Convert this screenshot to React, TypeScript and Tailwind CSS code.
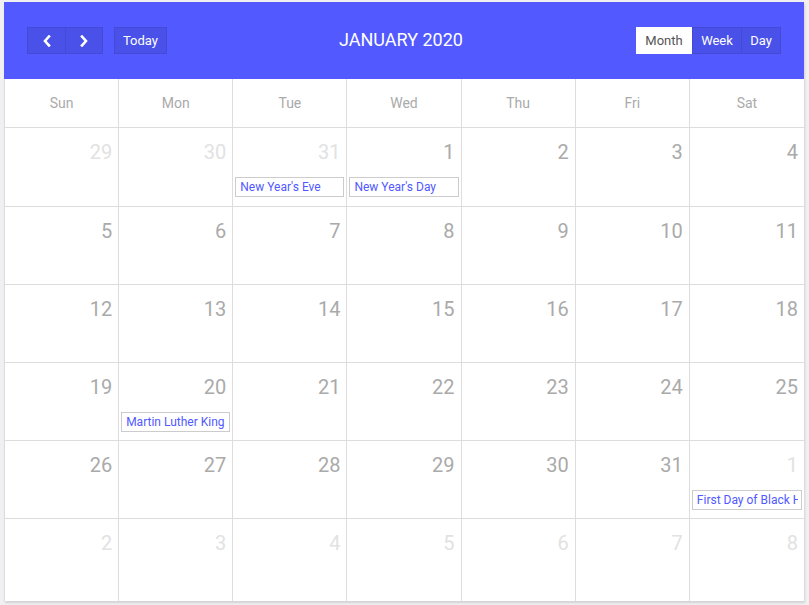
import React from "react";

type Cell = { d: number; cur: boolean; ev?: string };

const rows: Cell[][] = [
  [
    { d: 29, cur: false },
    { d: 30, cur: false },
    { d: 31, cur: false, ev: "New Year's Eve" },
    { d: 1, cur: true, ev: "New Year's Day" },
    { d: 2, cur: true },
    { d: 3, cur: true },
    { d: 4, cur: true },
  ],
  [5, 6, 7, 8, 9, 10, 11].map((d) => ({ d, cur: true })),
  [12, 13, 14, 15, 16, 17, 18].map((d) => ({ d, cur: true })),
  [19, 20, 21, 22, 23, 24, 25].map((d) => ({
    d,
    cur: true,
    ev: d === 20 ? "Martin Luther King" : undefined,
  })),
  [
    { d: 26, cur: true },
    { d: 27, cur: true },
    { d: 28, cur: true },
    { d: 29, cur: true },
    { d: 30, cur: true },
    { d: 31, cur: true },
    { d: 1, cur: false, ev: "First Day of Black History Month" },
  ],
  [2, 3, 4, 5, 6, 7, 8].map((d) => ({ d, cur: false })),
];

const days = ["Sun", "Mon", "Tue", "Wed", "Thu", "Fri", "Sat"];

function Chevron({ left }: { left?: boolean }) {
  return (
    <svg width="10" height="12" viewBox="0 0 10 12" fill="none">
      <path
        d={left ? "M7 1.5 L3 6 L7 10.5" : "M3 1.5 L7 6 L3 10.5"}
        stroke="white"
        strokeWidth="2.6"
        strokeLinecap="square"
      />
    </svg>
  );
}

export default function App() {
  return (
    <div
      className="w-[809px] h-[605px] bg-[#f0f0f2] pl-[4px] pt-[2px]"
      style={{ fontFamily: "Roboto, 'Noto Sans', sans-serif" }}
    >
      <div className="w-[800px] h-[599px] bg-white flex flex-col shadow-[1px_2px_2px_rgba(0,0,0,0.12)] overflow-hidden">
        <div className="h-[77px] bg-[#5159ff] flex items-center justify-between px-[23px] relative shrink-0">
          <div className="flex items-center gap-[11px]">
            <div className="flex">
              <button className="w-[39px] h-[27px] bg-[#4951e8] border border-[#434ad8] flex items-center justify-center">
                <Chevron left />
              </button>
              <button className="w-[37px] h-[27px] bg-[#4951e8] border border-l-0 border-[#434ad8] flex items-center justify-center">
                <Chevron />
              </button>
            </div>
            <button className="w-[53px] h-[27px] bg-[#4951e8] border border-[#434ad8] text-white text-[13px] flex items-center justify-center">
              Today
            </button>
          </div>
          <div className="absolute left-0 right-[6px] top-0 bottom-0 flex items-center justify-center pointer-events-none">
            <span className="text-white text-[18px] leading-none pb-[1px]">JANUARY 2020</span>
          </div>
          <div className="flex">
            <button className="w-[56px] h-[27px] bg-white text-[#555] text-[13px] flex items-center justify-center">
              Month
            </button>
            <button className="w-[50px] h-[27px] bg-[#4951e8] border border-[#434ad8] text-white text-[13px] flex items-center justify-center">
              Week
            </button>
            <button className="w-[39px] h-[27px] bg-[#4951e8] border border-l-0 border-[#434ad8] text-white text-[13px] flex items-center justify-center">
              Day
            </button>
          </div>
        </div>
        <div className="flex-1 flex flex-col border-l border-[#dddddd]">
          <div className="grid grid-cols-7 h-[49px] shrink-0 border-b border-[#dddddd]">
            {days.map((d, i) => (
              <div
                key={d}
                className={`flex items-center justify-center text-[14px] text-[#aaaaaa] ${
                  i < 6 ? "border-r border-[#dddddd]" : ""
                }`}
              >
                {d}
              </div>
            ))}
          </div>
          {rows.map((row, ri) => (
            <div
              key={ri}
              className={`grid grid-cols-7 ${
                ri === 0
                  ? "h-[79px] border-b border-[#dddddd] shrink-0"
                  : ri < 5
                  ? "h-[78px] border-b border-[#dddddd] shrink-0"
                  : "flex-1"
              }`}
            >
              {row.map((c, ci) => (
                <div
                  key={ci}
                  className={`flex flex-col min-w-0 ${
                    ci < 6 ? "border-r border-[#dddddd]" : ""
                  }`}
                >
                  <div
                    className={`text-right pr-[6px] pt-[12px] text-[20px] leading-[24px] ${
                      c.cur ? "text-[#aaaaaa]" : "text-[#e2e2e2]"
                    }`}
                  >
                    {c.d}
                  </div>
                  {c.ev && (
                    <div className="ml-[2px] mr-[2px] mt-[13px] h-[20px] border border-[#cccccc] pl-[4px] pr-[3px]">
                      <div className="text-[#5159ff] text-[12px] leading-[18px] whitespace-nowrap overflow-hidden">
                        {c.ev}
                      </div>
                    </div>
                  )}
                </div>
              ))}
            </div>
          ))}
        </div>
      </div>
    </div>
  );
}
